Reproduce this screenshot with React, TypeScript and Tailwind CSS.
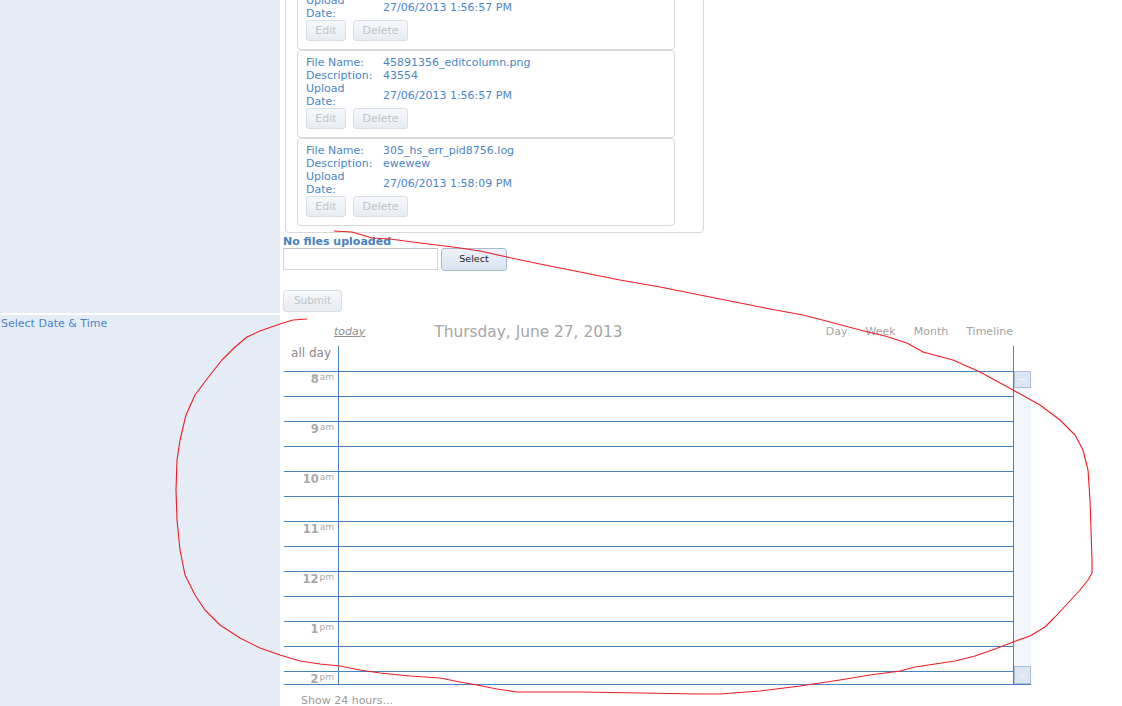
import React from "react";

const FONT = { fontFamily: '"DejaVu Sans", Verdana, sans-serif' };

type FileItem = { name: string; desc: string; date: string };

const files: FileItem[] = [
  { name: "44120057_grid.png", desc: "test", date: "27/06/2013 1:56:57 PM" },
  { name: "45891356_editcolumn.png", desc: "43554", date: "27/06/2013 1:56:57 PM" },
  { name: "305_hs_err_pid8756.log", desc: "ewewew", date: "27/06/2013 1:58:09 PM" },
];

function DisabledButton({ label, width }: { label: string; width: string }) {
  return (
    <div
      className={`${width} h-[21px] flex items-center justify-center rounded-[3px] border border-[#d7dee7] bg-gradient-to-b from-[#f6f8fb] to-[#e8edf3] text-[11px] text-[#c0c4c8]`}
    >
      {label}
    </div>
  );
}

function FileCard({ f }: { f: FileItem }) {
  return (
    <div className="w-[378px] h-[88px] rounded-[4px] border border-[#d9d9d9] bg-white pt-[5px] pl-[8px] text-[11px] leading-[13px] text-[#4a86c6]">
      <div className="flex">
        <div className="w-[77px]">File Name:</div>
        <div>{f.name}</div>
      </div>
      <div className="flex">
        <div className="w-[77px]">Description:</div>
        <div>{f.desc}</div>
      </div>
      <div className="flex items-center">
        <div className="w-[77px] pr-[8px]">Upload Date:</div>
        <div>{f.date}</div>
      </div>
      <div className="flex gap-[7px]">
        <DisabledButton label="Edit" width="w-[40px]" />
        <DisabledButton label="Delete" width="w-[55px]" />
      </div>
    </div>
  );
}

function UploadPanel() {
  return (
    <div className="pl-[3px] pb-[1px]">
      <div className="ml-[2px] mt-[-45px] w-[419px] rounded-[4px] border border-[#d9d9d9] pt-[6px] pl-[11px] pb-[6px]">
        {files.map((f) => (
          <FileCard key={f.name} f={f} />
        ))}
      </div>
      <div className="mt-[2px] text-[11px] leading-[13px] font-bold text-[#4a80bd]">No files uploaded</div>
      <div className="flex">
        <div className="w-[155px] h-[22px] border border-[#cfd6de] border-t-[#b9c1ca] bg-white" />
        <div className="ml-[3px] w-[66px] h-[23px] flex items-center justify-center rounded-[3px] border border-[#a9bad0] bg-gradient-to-b from-[#edf2f9] to-[#d8e3f1] text-[9.5px] text-[#1e1e1e]">
          Select
        </div>
      </div>
      <div className="mt-[19px] w-[59px] h-[22px] flex items-center justify-center rounded-[3px] border border-[#d7dee7] bg-gradient-to-b from-[#f6f8fb] to-[#e8edf3] text-[10.5px] text-[#c0c4c8]">
        Submit
      </div>
    </div>
  );
}

const hours: { h: string; p: string }[] = [
  { h: "8", p: "am" },
  { h: "9", p: "am" },
  { h: "10", p: "am" },
  { h: "11", p: "am" },
  { h: "12", p: "pm" },
  { h: "1", p: "pm" },
  { h: "2", p: "pm" },
];

function Calendar() {
  const slots: { label?: { h: string; p: string } }[] = [];
  hours.forEach((hr) => {
    slots.push({ label: hr });
    slots.push({});
  });
  return (
    <div className="w-[747px]">
      {/* toolbar */}
      <div className="mt-[8px] h-[18px] flex items-center text-[11px] text-[#a3a3a3]">
        <span className="ml-[50px] italic underline text-[#8e8e8e]">today</span>
        <span className="ml-[69px] pt-[1px] text-[15.4px] text-[#a6a6a6]">Thursday, June 27, 2013</span>
        <div className="ml-auto mr-[18px] flex gap-[18px]">
          <span>Day</span>
          <span>Week</span>
          <span>Month</span>
          <span>Timeline</span>
        </div>
      </div>

      {/* grid */}
      <div className="mt-[5px]">
        <div className="flex h-[25px]">
          <div className="w-[730px] flex">
            <div className="w-[54px] pr-[7px] text-right text-[12px] leading-[14px] text-[#8a8a8a]">all day</div>
            <div className="flex-1 border-l border-r border-[#4683c0]" />
          </div>
        </div>
        <div className="flex h-[314px] border-b border-[#4683c0]">
          <div className="w-[730px] h-[313px] overflow-hidden">
            {slots.map((s, i) => (
              <div key={i} className="h-[25px] flex border-t border-[#4683c0]">
                <div className="w-[54px] pr-[4px] text-right text-[11.5px] leading-[14px] font-bold text-[#a8a8a8]">
                  {s.label ? (
                    <>
                      {s.label.h}
                      <span className="ml-px align-top text-[9px] leading-[10px] font-normal">{s.label.p}</span>
                    </>
                  ) : null}
                </div>
                <div className="flex-1 border-l border-r border-[#4683c0]" />
              </div>
            ))}
          </div>
          {/* scrollbar */}
          <div className="w-[17px] h-[313px] bg-[#f3f7fc] flex flex-col justify-between">
            <div className="h-[17px] border border-[#a9bed7] bg-[#dce6f3] flex items-center justify-center">
              <div className="w-[7px] h-px bg-[#f3f6fa]" />
            </div>
            <div className="h-[18px] border border-[#a9bed7] bg-[#dce6f3] flex items-center justify-center">
              <svg width="7" height="7" viewBox="0 0 7 7">
                <path d="M1 6 L6 1 M3 6 L6 3" stroke="#f3f6fa" strokeWidth="1" />
              </svg>
            </div>
          </div>
        </div>
      </div>
      <div className="mt-[9px] pl-[17px] text-[11px] leading-[13px] text-[#9a9a9a]">Show 24 hours...</div>
    </div>
  );
}

// hand-drawn red outline drawn over the scheduler
const outline =
  "334,231 352,232 372,238 390,239 420,243 453,247 480,251 507,257 540,264 580,272 620,280 660,287 700,295 740,303 770,309 803,315 830,322 860,330 885,336 907,343 923,352 953,360 980,372 1013,390 1040,405 1060,420 1075,435 1083,450 1088,470 1090,500 1091,530 1092,560 1092,573 1088,580 1080,590 1068,603 1055,617 1045,627 1030,636 1013,642 995,649 975,656 955,661 935,664 915,667 900,671 870,675 840,680 800,686 760,691 720,694 700,694 640,693 580,692 540,692 517,692 497,689 477,685 460,682 440,678 410,676 380,673 360,670 340,666 320,664 300,661 280,655 260,648 240,638 220,625 205,610 195,595 185,575 180,550 177,520 176,490 177,460 180,440 186,415 195,395 210,375 222,360 235,347 247,337 260,331 280,324 293,320 307,319";

export default function App() {
  return (
    <div className="relative w-[1122px] h-[706px] overflow-hidden bg-white" style={FONT}>
      <div className="flex flex-col gap-[2px]">
        <div className="flex">
          <div className="w-[280px] shrink-0 bg-[#e5ecf5]" />
          <div className="flex-1">
            <UploadPanel />
          </div>
        </div>
        <div className="flex">
          <div className="w-[280px] shrink-0 bg-[#e5ecf5] pl-[1px] pt-[2px] text-[11px] leading-[13px] text-[#4a86c6]">
            Select Date &amp; Time
          </div>
          <div className="flex-1 pl-[4px] pb-[40px]">
            <Calendar />
          </div>
        </div>
      </div>
      <svg className="absolute left-0 top-0 pointer-events-none" width="1122" height="706">
        <polyline points={outline} fill="none" stroke="#ee1c24" strokeWidth="1.1" strokeLinejoin="round" />
      </svg>
    </div>
  );
}
